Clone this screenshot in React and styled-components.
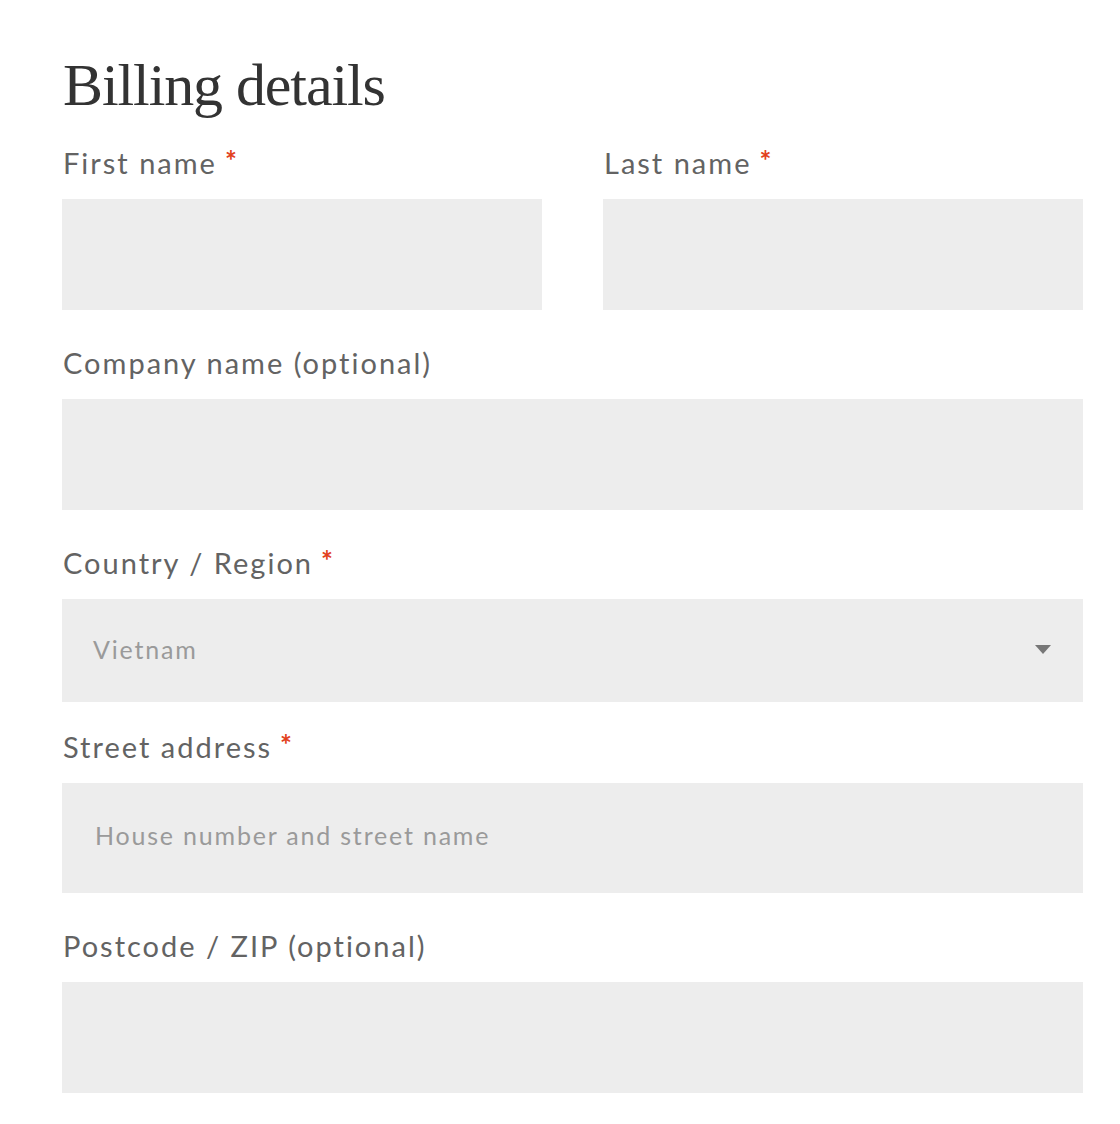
import styled, { createGlobalStyle } from "styled-components";

const GlobalStyle = createGlobalStyle`
  body {
    margin: 0;
    background: #fff;
    font-family: Lato, "Noto Sans", sans-serif;
  }
`;

const Page = styled.main`
  width: 1021px;
  padding: 50px 0 0 62px;
`;

const Title = styled.h1`
  margin: 0 0 21px 1px;
  font-family: "Liberation Serif", serif;
  font-weight: 400;
  font-size: 60px;
  line-height: 70px;
  letter-spacing: -1.1px;
  color: #333;
`;

const Row = styled.div`
  display: grid;
  grid-template-columns: 1fr 1fr;
  column-gap: 61px;
`;

const Field = styled.div`
  display: flex;
  flex-direction: column;
  margin-bottom: ${(props) => props.$gap ?? 31}px;
`;

const Label = styled.label`
  display: block;
  height: 40px;
  padding-top: 2px;
  margin: 0 0 16px 1px;
  font-size: 29px;
  line-height: 40px;
  letter-spacing: 2px;
  color: #636363;
`;

const Required = styled.span`
  margin-left: 8px;
  font-size: 28px;
  font-weight: 700;
  vertical-align: top;
  line-height: 34px;
  color: #e2401c;
`;

const Input = styled.div`
  height: ${(props) => props.$height ?? 111}px;
  background: #ededed;
  display: flex;
  align-items: center;
  padding: 0 32px 6px 33px;
  font-size: 25px;
  letter-spacing: 1.8px;
  color: #9a9a9a;
  box-sizing: border-box;
`;

const Select = styled(Input)`
  justify-content: space-between;
  padding-left: 31px;
  padding-bottom: 4px;
`;

const Caret = styled.span`
  width: 0;
  height: 0;
  margin-top: 2px;
  border-left: 8px solid transparent;
  border-right: 8px solid transparent;
  border-top: 9px solid #777;
`;

function Labelled({ text, required }) {
  return (
    <Label>
      {text}
      {required && <Required>*</Required>}
    </Label>
  );
}

export default function App() {
  return (
    <>
      <GlobalStyle />
      <Page>
        <Title>Billing details</Title>
        <Row>
          <Field>
            <Labelled text="First name" required />
            <Input />
          </Field>
          <Field>
            <Labelled text="Last name" required />
            <Input />
          </Field>
        </Row>
        <Field>
          <Labelled text="Company name (optional)" />
          <Input />
        </Field>
        <Field $gap={23}>
          <Labelled text="Country / Region" required />
          <Select $height={103}>
            <span>Vietnam</span>
            <Caret />
          </Select>
        </Field>
        <Field>
          <Labelled text="Street address" required />
          <Input $height={110}>House number and street name</Input>
        </Field>
        <Field>
          <Labelled text="Postcode / ZIP (optional)" />
          <Input />
        </Field>
      </Page>
    </>
  );
}
